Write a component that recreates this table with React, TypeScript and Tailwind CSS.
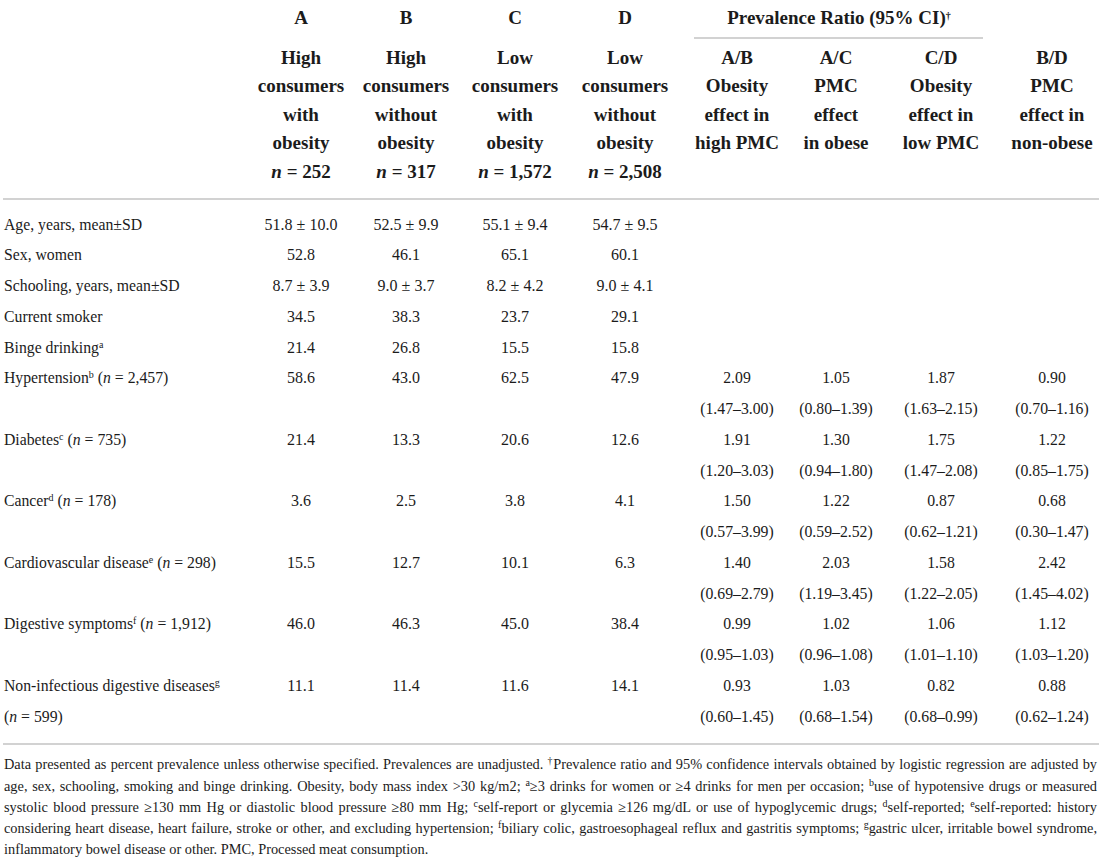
import React from "react";

type PR = [string, string];
type Row = { label: React.ReactNode; v: string[]; pr?: PR[] };

const N = () => <i>n</i>;

const rows: Row[] = [
  { label: <>Age, years, mean±SD</>, v: ["51.8 ± 10.0", "52.5 ± 9.9", "55.1 ± 9.4", "54.7 ± 9.5"] },
  { label: <>Sex, women</>, v: ["52.8", "46.1", "65.1", "60.1"] },
  { label: <>Schooling, years, mean±SD</>, v: ["8.7 ± 3.9", "9.0 ± 3.7", "8.2 ± 4.2", "9.0 ± 4.1"] },
  { label: <>Current smoker</>, v: ["34.5", "38.3", "23.7", "29.1"] },
  { label: <>Binge drinking<sup className="text-[10px]">a</sup></>, v: ["21.4", "26.8", "15.5", "15.8"] },
  {
    label: <>Hypertension<sup className="text-[10px]">b</sup> (<N /> = 2,457)</>,
    v: ["58.6", "43.0", "62.5", "47.9"],
    pr: [["2.09", "(1.47–3.00)"], ["1.05", "(0.80–1.39)"], ["1.87", "(1.63–2.15)"], ["0.90", "(0.70–1.16)"]],
  },
  {
    label: <>Diabetes<sup className="text-[10px]">c</sup> (<N /> = 735)</>,
    v: ["21.4", "13.3", "20.6", "12.6"],
    pr: [["1.91", "(1.20–3.03)"], ["1.30", "(0.94–1.80)"], ["1.75", "(1.47–2.08)"], ["1.22", "(0.85–1.75)"]],
  },
  {
    label: <>Cancer<sup className="text-[10px]">d</sup> (<N /> = 178)</>,
    v: ["3.6", "2.5", "3.8", "4.1"],
    pr: [["1.50", "(0.57–3.99)"], ["1.22", "(0.59–2.52)"], ["0.87", "(0.62–1.21)"], ["0.68", "(0.30–1.47)"]],
  },
  {
    label: <>Cardiovascular disease<sup className="text-[10px]">e</sup> (<N /> = 298)</>,
    v: ["15.5", "12.7", "10.1", "6.3"],
    pr: [["1.40", "(0.69–2.79)"], ["2.03", "(1.19–3.45)"], ["1.58", "(1.22–2.05)"], ["2.42", "(1.45–4.02)"]],
  },
  {
    label: <>Digestive symptoms<sup className="text-[10px]">f</sup> (<N /> = 1,912)</>,
    v: ["46.0", "46.3", "45.0", "38.4"],
    pr: [["0.99", "(0.95–1.03)"], ["1.02", "(0.96–1.08)"], ["1.06", "(1.01–1.10)"], ["1.12", "(1.03–1.20)"]],
  },
  {
    label: (
      <>
        Non-infectious digestive diseases<sup className="text-[10px]">g</sup>
        <br />(<N /> = 599)
      </>
    ),
    v: ["11.1", "11.4", "11.6", "14.1"],
    pr: [["0.93", "(0.60–1.45)"], ["1.03", "(0.68–1.54)"], ["0.82", "(0.68–0.99)"], ["0.88", "(0.62–1.24)"]],
  },
];

const heads: string[][] = [
  ["High", "consumers", "with", "obesity"],
  ["High", "consumers", "without", "obesity"],
  ["Low", "consumers", "with", "obesity"],
  ["Low", "consumers", "without", "obesity"],
];
const ns = ["252", "317", "1,572", "2,508"];
const prHeads: string[][] = [
  ["A/B", "Obesity", "effect in", "high PMC"],
  ["A/C", "PMC", "effect", "in obese"],
  ["C/D", "Obesity", "effect in", "low PMC"],
  ["B/D", "PMC", "effect in", "non-obese"],
];

const Sup = ({ children }: { children: React.ReactNode }) => (
  <sup className="text-[10px]">{children}</sup>
);

export default function App() {
  return (
    <div className="w-[1104px] h-[858px] overflow-hidden bg-white text-[#1b1b1b] font-['Liberation_Serif','Times_New_Roman',serif] pl-[3px] pr-[5px]">
      {/* Header */}
      <div className="grid grid-cols-[246px_104px_106px_112px_108px_116px_82px_128px_94px] font-bold text-[19px]">
        <div />
        {["A", "B", "C", "D"].map((l) => (
          <div key={l} className="pt-[4px] leading-[28px] text-center">
            {l}
          </div>
        ))}
        <div className="col-span-3 flex flex-col pt-[4px]">
          <div className="leading-[28px] text-center pr-[6px]">
            Prevalence Ratio (95% CI)<Sup>†</Sup>
          </div>
          <div className="mt-[5px] h-[2px] bg-[#d2d2d2] ml-[15px] mr-[22px]" />
        </div>
        <div />

        <div />
        {heads.map((h, i) => (
          <div key={i} className="pt-[5px] leading-[28.4px] text-center">
            {h.map((t) => (
              <div key={t}>{t}</div>
            ))}
            <div>
              <i>n</i> = {ns[i]}
            </div>
          </div>
        ))}
        {prHeads.map((h, i) => (
          <div key={i} className="pt-[5px] leading-[28.4px] text-center whitespace-nowrap">
            {h.map((t) => (
              <div key={t}>{t}</div>
            ))}
          </div>
        ))}
      </div>
      <div className="mt-[12px] h-[2px] bg-[#d2d2d2]" />

      {/* Body */}
      <div className="mt-[9.6px] flex flex-col leading-[30.75px]">
        {rows.map((r, i) => (
          <div
            key={i}
            className="grid grid-cols-[246px_104px_106px_112px_108px_116px_82px_128px_94px] items-start"
          >
            <div className="pl-[1px] text-[15.75px]">{r.label}</div>
            {r.v.map((x, j) => (
              <div key={j} className="text-center text-[16px] whitespace-nowrap">
                {x}
              </div>
            ))}
            {r.pr
              ? r.pr.map((p, j) => (
                  <div key={j} className="text-center text-[15.75px] whitespace-nowrap">
                    <div>{p[0]}</div>
                    <div>{p[1]}</div>
                  </div>
                ))
              : null}
          </div>
        ))}
      </div>
      <div className="mt-[10.5px] h-[2px] bg-[#d2d2d2]" />

      {/* Footer */}
      <div className="mt-[9.5px] pl-[1px] pr-[2px] text-[14.35px] leading-[21.15px]">
        <div className="whitespace-nowrap text-justify [text-align-last:justify]">
          Data presented as percent prevalence unless otherwise specified. Prevalences are unadjusted. <Sup>†</Sup>Prevalence ratio and 95% confidence intervals obtained by logistic regression are adjusted by
        </div>
        <div className="whitespace-nowrap text-justify [text-align-last:justify]">
          age, sex, schooling, smoking and binge drinking. Obesity, body mass index &gt;30 kg/m2; <Sup>a</Sup>≥3 drinks for women or ≥4 drinks for men per occasion; <Sup>b</Sup>use of hypotensive drugs or measured
        </div>
        <div className="whitespace-nowrap text-justify [text-align-last:justify]">
          systolic blood pressure ≥130 mm Hg or diastolic blood pressure ≥80 mm Hg; <Sup>c</Sup>self-report or glycemia ≥126 mg/dL or use of hypoglycemic drugs; <Sup>d</Sup>self-reported; <Sup>e</Sup>self-reported: history
        </div>
        <div className="whitespace-nowrap text-justify [text-align-last:justify]">
          considering heart disease, heart failure, stroke or other, and excluding hypertension; <Sup>f</Sup>biliary colic, gastroesophageal reflux and gastritis symptoms; <Sup>g</Sup>gastric ulcer, irritable bowel syndrome,
        </div>
        <div className="whitespace-nowrap">
          inflammatory bowel disease or other. PMC, Processed meat consumption.
        </div>
      </div>
    </div>
  );
}
